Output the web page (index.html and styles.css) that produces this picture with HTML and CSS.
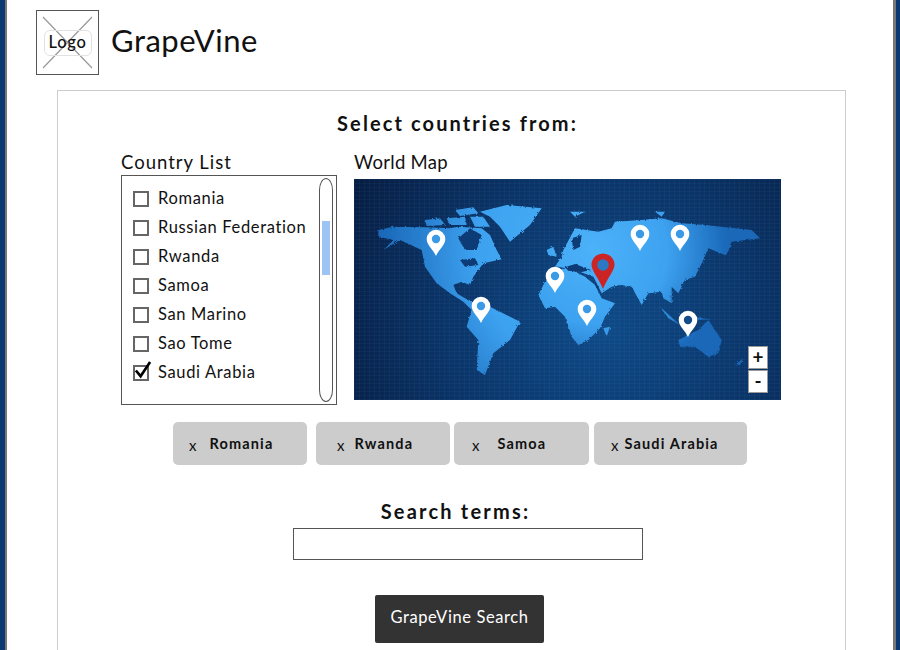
FILE: index.html
```html
<!DOCTYPE html>
<html lang="en">
<head>
<meta charset="utf-8">
<title>GrapeVine</title>
<link rel="stylesheet" href="styles.css">
</head>
<body>
<div class="frame">
  <header class="header">
    <div class="logo">
      <svg class="logo-x" viewBox="0 0 61 63" aria-hidden="true"><path d="M6 6L55 57M55 6L6 57"/></svg>
      <span class="logo-label">Logo</span>
    </div>
    <h1 class="brand">GrapeVine</h1>
  </header>
  <main class="panel">
    <h2 class="title">Select countries from:</h2>
    <div class="pickers">
      <section class="list-col">
        <h3 class="col-label col-label-wide">Country List</h3>
        <div class="listbox">
          <ul class="rows">
            <li class="row"><span class="check"></span>Romania</li>
            <li class="row"><span class="check"></span>Russian Federation</li>
            <li class="row"><span class="check"></span>Rwanda</li>
            <li class="row"><span class="check"></span>Samoa</li>
            <li class="row"><span class="check"></span>San Marino</li>
            <li class="row"><span class="check"></span>Sao Tome</li>
            <li class="row"><span class="check"><svg class="tick" viewBox="0 0 20 20" aria-hidden="true"><path d="M3 10L8 16L18 1"/></svg></span>Saudi Arabia</li>
          </ul>
          <div class="scrollbar"><div class="thumb"></div></div>
        </div>
      </section>
      <section class="map-col">
        <h3 class="col-label">World Map</h3>
        <div class="map">
          <svg class="map-art" viewBox="0 0 427 221" aria-hidden="true">
            <defs>
              <radialGradient id="bg" gradientUnits="userSpaceOnUse" cx="250" cy="150" r="290">
                <stop offset="0" stop-color="#0f4a88"/>
                <stop offset=".55" stop-color="#0b3468"/>
                <stop offset="1" stop-color="#071d42"/>
              </radialGradient>
              <radialGradient id="land-w" gradientUnits="userSpaceOnUse" cx="732" cy="240" r="640">
                <stop offset="0" stop-color="#4cb2f9"/>
                <stop offset=".55" stop-color="#3da2f0"/>
                <stop offset="1" stop-color="#1a68b8"/>
              </radialGradient>
              <radialGradient id="land-e" gradientUnits="userSpaceOnUse" cx="87" cy="240" r="400">
                <stop offset="0" stop-color="#4cb2f9"/>
                <stop offset=".55" stop-color="#3da2f0"/>
                <stop offset="1" stop-color="#1a68b8"/>
              </radialGradient>
              <pattern id="grid" width="5" height="4" patternUnits="userSpaceOnUse">
                <path d="M0 0H5M0 0V4" stroke="#5aa6e0" stroke-opacity=".1" stroke-width="1" fill="none"/>
              </pattern>
              <filter id="rough" x="-5%" y="-5%" width="110%" height="110%">
                <feTurbulence type="fractalNoise" baseFrequency=".45" numOctaves="2" seed="4"/>
                <feDisplacementMap in="SourceGraphic" scale="3"/>
              </filter>
              <path id="pin" d="M0 0C-3-7-9.300-11-9.300-17A9.300 9.300 0 0 1 9.300-17C9.300-11 3-7 0 0Z"/>
            </defs>
            <rect width="427" height="221" fill="url(#bg)"/>
            <rect width="427" height="221" fill="url(#grid)"/>
            <g filter="url(#rough)">
              <g transform="translate(-4,-9) scale(.3333)" fill="url(#land-w)">
                <path d="M85 180L130 170L225 172L300 175L325 170L395 175L420 195L440 240L455 268L400 280L370 320L360 345L335 335L310 345L320 370L345 385L372 398L420 410L510 455L480 510L430 550L405 615L380 600L385 510L350 470L365 420L340 395L300 370L260 340L225 290L215 240L150 210L100 240L130 210L85 200Z"/>
                <path d="M390 125L470 105L575 115L540 165L480 215L450 170L420 140Z"/>
                <path d="M225 150L270 145L285 165L230 168Z"/>
                <path d="M315 120L370 112L385 130L330 138Z"/>
                <path d="M290 145L345 140L350 165L300 165Z"/>
                <path d="M360 140L400 140L420 170L375 170Z"/>
                <path fill="#0c3a74" d="M325 205L360 175L395 195L380 240L345 240Z"/>
                <path fill="#0c3a74" d="M330 270L375 265L385 285L345 290Z"/>
              </g>
              <g transform="translate(211,-9) scale(.3333)" fill="url(#land-e)">
                <path d="M-80 375L-60 335L-30 300L10 295L60 320L90 345L110 385L150 400L120 440L105 475L70 510L40 525L20 500L0 440L-30 410L-60 415Z"/>
                <path d="M-5 240L30 175L100 185L140 175L150 155L230 150L290 145L350 160L420 165L560 180L585 205L500 215L480 255L430 235L415 270L390 320L360 330L340 370L320 350L320 400L295 385L290 365L250 370L230 405L200 350L170 345L140 350L110 370L85 320L30 300L-20 290L-30 290L-10 260Z"/>
                <path d="M340 510L400 480L430 450L470 510L460 550L430 560L390 530L345 530Z"/>
                <path d="M285 410L345 465L310 445Z"/>
                <path d="M335 430L440 450L390 448Z"/>
                <path d="M480 225L500 225L480 260Z"/>
                <path d="M-55 240L-35 230L-25 260L-50 255Z"/>
                <path d="M510 585L535 565L525 585Z"/>
                <path d="M115 475L135 470L125 500Z"/>
                <path d="M15 125L60 125L30 140Z"/>
                <path d="M270 125L300 125L290 140Z"/>
                <path fill="#0c3a74" d="M0 292L30 282L78 300L50 306L10 302Z"/>
                <path fill="#0c3a74" d="M20 205L50 195L45 230L25 240Z"/>
                <path fill="#0c3a74" d="M85 322L100 352L108 372L92 345Z"/>
              </g>
            </g>
            <use class="pin-white" href="#pin" x="82" y="77"/>
            <use class="pin-white" href="#pin" x="127" y="144"/>
            <use class="pin-white" href="#pin" x="201" y="114"/>
            <use class="pin-white" href="#pin" x="286" y="72"/>
            <use class="pin-white" href="#pin" x="326" y="72"/>
            <use class="pin-white" href="#pin" x="233" y="147"/>
            <use class="pin-white" href="#pin" x="334" y="158"/>
            <circle class="hole-land" cx="82" cy="60" r="4.200"/>
            <circle class="hole-land" cx="127" cy="127" r="4.200"/>
            <circle class="hole-land" cx="201" cy="97" r="4.200"/>
            <circle class="hole-land" cx="286" cy="55" r="4.200"/>
            <circle class="hole-land" cx="326" cy="55" r="4.200"/>
            <circle class="hole-land" cx="233" cy="130" r="4.200"/>
            <circle class="hole-sea" cx="334" cy="141" r="4.200"/>
            <path class="pin-red" d="M249 110C245 100 237.500 91 237.500 86A11.500 11.500 0 0 1 260.500 86C260.500 91 253 100 249 110Z"/>
            <circle class="pin-red-hole" cx="249" cy="86" r="5.800"/>
          </svg>
          <div class="zoom">
            <span class="zoom-btn">+</span>
            <span class="zoom-btn">-</span>
          </div>
        </div>
      </section>
    </div>
    <div class="tags">
      <div class="tag tag-romania"><span class="tag-x">x</span><span>Romania</span></div>
      <div class="tag tag-rwanda"><span class="tag-x">x</span><span>Rwanda</span></div>
      <div class="tag tag-samoa"><span class="tag-x">x</span><span>Samoa</span></div>
      <div class="tag tag-saudi"><span class="tag-x">x</span><span>Saudi Arabia</span></div>
    </div>
    <h2 class="search-label">Search terms:</h2>
    <input class="search-input" type="text" aria-label="Search terms">
    <button class="search-btn" type="button">GrapeVine Search</button>
  </main>
</div>
</body>
</html>
```
FILE: styles.css
```css
* { box-sizing: border-box; }
html, body { margin: 0; padding: 0; height: 650px; overflow: hidden; background: #fff; }
body {
  font-family: "Lato", "Open Sans", sans-serif;
  color: #111;
}
.frame {
  height: 650px;
  width: 900px;
  border-left: 5px solid #0a3872;
  border-right: 4px solid #0a3872;
  background: #fff;
  box-shadow: inset 2px 0 0 #777, inset -3px 0 0 #777;
  padding: 10px 50px 0 31px;
  overflow: hidden;
}
.header { display: flex; align-items: center; height: 65px; }
.logo {
  position: relative;
  width: 63px;
  height: 65px;
  border: 1px solid #555;
  display: flex;
  align-items: center;
  justify-content: center;
}
.logo-x { position: absolute; inset: 0; width: 100%; height: 100%; }
.logo-x path { stroke: #999; stroke-width: 1.200; fill: none; }
.logo-label {
  position: relative;
  width: 48px;
  height: 26px;
  border: 1.500px solid #e2e2e2;
  border-radius: 6px;
  font-size: 16.500px;
  font-weight: 500;
  letter-spacing: .7px;
  line-height: 23px;
  text-align: center;
}
.brand {
  margin: 0 0 5px 12px;
  font-size: 31px;
  font-weight: 400;
  letter-spacing: .5px;
  line-height: 36px;
}
.panel {
  margin: 15px 0 0 21px;
  width: 789px;
  height: 600px;
  border: 1px solid #ccc;
  padding-top: 18px;
  display: flex;
  flex-direction: column;
}
.title {
  margin: 0 0 0 12px;
  text-align: center;
  font-size: 20px;
  font-weight: 700;
  letter-spacing: 2.100px;
  line-height: 28px;
}
.pickers { display: flex; gap: 17px; margin: 14px 0 0 63px; }
.col-label { margin: 0; font-size: 18.500px; font-weight: 400; line-height: 23px; letter-spacing: .3px; height: 24px; }
.col-label-wide { letter-spacing: 1px; }
.list-col { width: 216px; }
.listbox {
  display: flex;
  justify-content: space-between;
  height: 230px;
  border: 1px solid #555;
  padding: 2px 3px 0 11px;
}
.rows { list-style: none; margin: 6px 0 0; padding: 0; }
.row {
  display: flex;
  align-items: center;
  height: 29px;
  padding-bottom: 2px;
  font-size: 16.500px;
  letter-spacing: .65px;
  white-space: nowrap;
}
.check {
  position: relative;
  width: 16px;
  height: 16px;
  border: 2px solid #666;
  margin-right: 9px;
  margin-top: 2px;
  flex: none;
}
.tick { position: absolute; left: -2px; top: -6px; width: 19px; height: 19px; overflow: visible; }
.tick path { stroke: #000; stroke-width: 2.800; fill: none; }
.scrollbar {
  width: 14px;
  height: 224px;
  border: 1px solid #555;
  border-radius: 7px / 12px;
  padding: 42px 2px 0;
}
.thumb { height: 54px; background: #9ec4f5; }
.map-col { width: 427px; }
.map { position: relative; margin-top: 4px; width: 427px; height: 221px; }
.map-art { display: block; width: 427px; height: 221px; }
.pin-white { fill: #fff; }
.hole-land { fill: #3a9ae6; }
.hole-sea { fill: #134a88; }
.pin-red { fill: #cc2424; }
.pin-red-hole { fill: #2a79c4; }
.zoom {
  position: absolute;
  right: 13px;
  bottom: 7px;
  display: flex;
  flex-direction: column;
  gap: 1px;
}
.zoom-btn {
  width: 20px;
  height: 23px;
  background: #fff;
  border: 1px solid #999;
  font-size: 19px;
  font-weight: 700;
  line-height: 20px;
  text-align: center;
  color: #111;
}
.tags { display: flex; margin: 17px 0 0 115px; gap: 9px; }
.tag {
  display: flex;
  align-items: center;
  height: 43px;
  background: #ccc;
  border-radius: 5px;
  font-size: 14.500px;
  font-weight: 700;
  letter-spacing: 1.150px;
}
.tag-x { font-weight: 400; font-size: 15px; letter-spacing: 0; margin-top: 2px; }
.tag-romania { width: 134px; padding-left: 16px; gap: 13px; }
.tag-rwanda { width: 134px; padding-left: 21px; gap: 10px; }
.tag-samoa { width: 135px; margin-left: -5px; padding-left: 18px; gap: 18px; }
.tag-saudi { width: 153px; margin-left: -4px; padding-left: 17px; gap: 6px; }
.search-label {
  margin: 32px 0 0 8px;
  text-align: center;
  font-size: 20px;
  font-weight: 700;
  letter-spacing: 2.200px;
  line-height: 28px;
}
.search-input {
  display: block;
  margin: 3px 0 0 235px;
  width: 350px;
  height: 32px;
  border: 1px solid #555;
  background: #fff;
  border-radius: 0;
  padding: 0;
}
.search-btn {
  display: block;
  margin: 35px 0 0 317px;
  width: 169px;
  height: 48px;
  background: #333;
  color: #fff;
  border: 0;
  border-radius: 2px;
  font-family: inherit;
  font-size: 16.500px;
  letter-spacing: .6px;
  padding: 0 0 4px;
}
```
